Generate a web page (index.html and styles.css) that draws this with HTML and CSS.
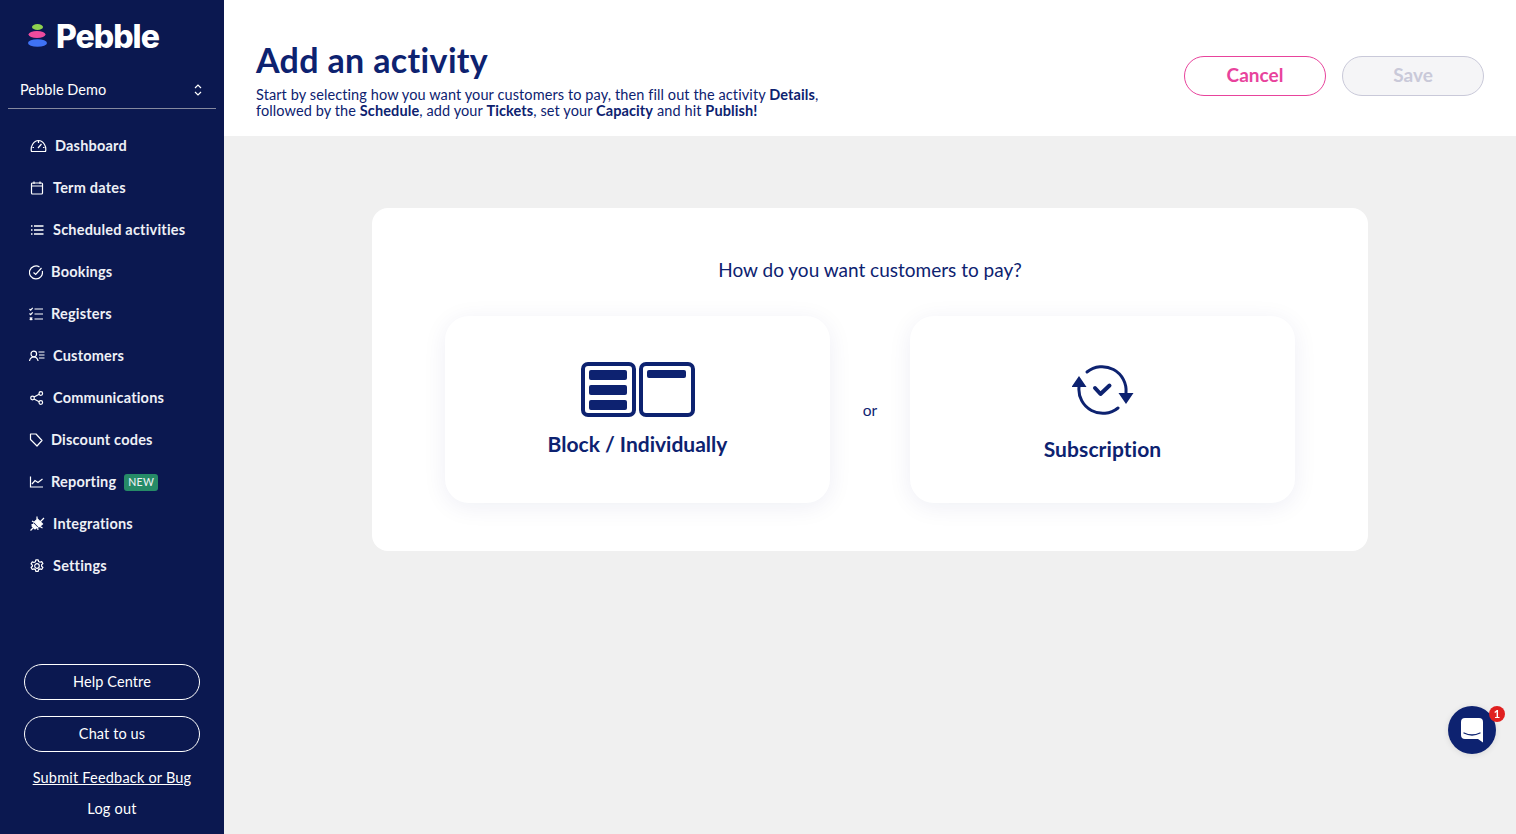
FILE: index.html
```html
<!DOCTYPE html>
<html lang="en">
<head>
    <meta charset="UTF-8">
    <meta name="viewport" content="width=device-width, initial-scale=1.0">
    <title>Add an activity</title>
    <link rel="stylesheet" href="styles.css">
</head>
<body>
    <aside class="sidebar">
        <div class="logo">
            <svg class="logo-mark" width="20" height="26" viewBox="0 0 20 26">
                <ellipse cx="9.500" cy="4" rx="5.500" ry="3" fill="#8fd14f"/>
                <ellipse cx="9" cy="11.500" rx="8.500" ry="3.500" fill="#ee4b9d"/>
                <ellipse cx="9.500" cy="20" rx="9.500" ry="3.800" fill="#3f72f5"/>
            </svg>
            <span class="logo-text">Pebble</span>
        </div>
        <div class="account">
            <span>Pebble Demo</span>
            <svg width="8" height="12" viewBox="0 0 8 12" fill="none" stroke="#fff" stroke-width="1.200"><path d="M1 4l3-3 3 3M1 8l3 3 3-3"/></svg>
        </div>
        <nav class="nav">
            <a class="nav-item">
                <svg class="icon" width="18" height="14" viewBox="-1 0 18 14"><path d="M1.500 12.500C.2 8 3.500 1.500 8.500 1.500S16.800 8 15.500 12.500zM8 9l3.500-4M4 8.500H2.500M8.500 1.500V4M14.500 8.500H13"/></svg>
                <span>Dashboard</span>
            </a>
            <a class="nav-item">
                <svg class="icon" width="16" height="14" viewBox="-1 0 16 14"><rect x="1.500" y="2" width="11" height="11" rx="1"/><path d="M1.500 5h11M4 .5v2.500M10 .5v2.500"/></svg>
                <span>Term dates</span>
            </a>
            <a class="nav-item">
                <svg class="icon icon-list" width="16" height="12" viewBox="-2 0 16 12"><path d="M3 2h9.500M3 6h9.500M3 10h9.500M0 2h1.500M0 6h1.500M0 10h1.500"/></svg>
                <span>Scheduled activities</span>
            </a>
            <a class="nav-item">
                <svg class="icon" width="14" height="15" viewBox="0 0 14 15"><path d="M13.300 6A6.500 6.500 0 1 1 10.500 2M4.500 7.500l2.200 2L12.500 3"/></svg>
                <span>Bookings</span>
            </a>
            <a class="nav-item">
                <svg class="icon" width="14" height="14" viewBox="0 0 14 14"><path d="M5.500 2H14M5.500 7H14M5.500 12H14M.5 2l1.200 1.200L3.700 .8M.5 6.500l1.200 1.200 2-2.400M.8 10.500L3.300 13M3.300 10.500L.8 13"/></svg>
                <span>Registers</span>
            </a>
            <a class="nav-item">
                <svg class="icon" width="16" height="12" viewBox="0 0 16 12"><circle cx="4.800" cy="4" r="2.800"/><path d="M.5 11c.5-2.500 2.300-4 4.300-4s3.800 1.500 4.300 4M9.500 2H15.500M10 5h5.500M10 8h5.500"/></svg>
                <span>Customers</span>
            </a>
            <a class="nav-item">
                <svg class="icon" width="16" height="14" viewBox="-1 0 16 14"><circle cx="2.500" cy="7" r="1.800"/><circle cx="10.800" cy="2.500" r="1.800"/><circle cx="10.800" cy="11.500" r="1.800"/><path d="M4 6l5.200-2.800M4 8l5.200 2.800"/></svg>
                <span>Communications</span>
            </a>
            <a class="nav-item">
                <svg class="icon" width="14" height="14" viewBox="-1 0 14 14"><path d="M.5 1h5.500l6 6.500-5 5.500L.5 6.500z" stroke-linejoin="round"/></svg>
                <span>Discount codes</span>
            </a>
            <a class="nav-item">
                <svg class="icon" width="14" height="12" viewBox="-1 0 14 12"><path d="M.5 .5V11h12.500M2 8l3-3.500 3 2 4.500-3.500"/></svg>
                <span>Reporting</span>
                <span class="badge-new">NEW</span>
            </a>
            <a class="nav-item">
                <svg class="icon" width="16" height="16" viewBox="-1 0 16 16"><path class="solid" d="M4.500 6L7.500 3l5 5-3.500 3z"/><path d="M.5 14.500l4-4M10 6l4-4M2 5l2.500 1.500M1.500 8.500h2.500M7 .5v2.500M8 14l-.5-3M12.500 12L10 10.500"/><path class="solid" d="M3.500 8l3.500 3.500-2 1.500-3-3z"/></svg>
                <span>Integrations</span>
            </a>
            <a class="nav-item">
                <svg class="icon" width="16" height="14" viewBox="-1 0 16 14"><circle cx="7" cy="7" r="2.300"/><path d="M5.800 .8h2.400l.4 1.700 1.400.7 1.700-.6 1.200 2-1.300 1.200v1.500l1.300 1.200-1.200 2-1.700-.6-1.400.7-.4 1.700H5.800l-.4-1.700-1.400-.7-1.700.6-1.200-2 1.300-1.200V6.100L1.100 4.900l1.200-2 1.700.6 1.400-.7z" stroke-linejoin="round"/></svg>
                <span>Settings</span>
            </a>
        </nav>
        <div class="sidebar-bottom">
            <a class="side-btn">Help Centre</a>
            <a class="side-btn">Chat to us</a>
            <a class="side-link underline">Submit Feedback or Bug</a>
            <a class="side-link">Log out</a>
        </div>
    </aside>
    <div class="page">
        <header class="page-header">
            <div class="page-title">
                <h1>Add an activity</h1>
                <p>Start by selecting how you want your customers to pay, then fill out the activity <b>Details</b>,<br>followed by the <b>Schedule</b>, add your <b>Tickets</b>, set your <b>Capacity</b> and hit <b>Publish!</b></p>
            </div>
            <div class="header-actions">
                <button class="btn btn-cancel">Cancel</button>
                <button class="btn btn-save" disabled>Save</button>
            </div>
        </header>
        <main class="content">
            <section class="card">
                <h2>How do you want customers to pay?</h2>
                <div class="options">
                    <div class="option">
                        <svg width="116" height="57" viewBox="0 0 116 57">
                            <rect x="3" y="3" width="51" height="51" rx="5" class="frame"/>
                            <rect x="9" y="9" width="38" height="10" rx="2" class="bar"/>
                            <rect x="9" y="24" width="38" height="10" rx="2" class="bar"/>
                            <rect x="9" y="39" width="38" height="10" rx="2" class="bar"/>
                            <rect x="61" y="3" width="52" height="51" rx="5" class="frame"/>
                            <rect x="67" y="9" width="39" height="8" rx="2" class="bar"/>
                        </svg>
                        <h3>Block / Individually</h3>
                    </div>
                    <span class="or">or</span>
                    <div class="option option-sub">
                        <svg width="62" height="52" viewBox="1071 363 62 52">
                            <path class="arc" d="M1086 372A24 24 0 0 1 1125 393"/>
                            <path class="arc" d="M1078 387A24 24 0 0 0 1117 408"/>
                            <path class="bar" d="M1078 376l7.500 11h-15zM1125 404l-7.500-11h15z"/>
                            <path class="check" d="M1094 388l5.500 6 9-8.500"/>
                        </svg>
                        <h3>Subscription</h3>
                    </div>
                </div>
            </section>
        </main>
    </div>
    <div class="chat-launcher">
        <svg width="22" height="25" viewBox="0 0 22 25">
            <path d="M4 0h14a4 4 0 0 1 4 4v20.500L17 21H4a4 4 0 0 1-4-4V4a4 4 0 0 1 4-4z" fill="#fff"/>
            <path d="M3 15c5 2.500 11 2.500 16 0" fill="none" stroke="#0d2270" stroke-width="1.300" stroke-linecap="round"/>
        </svg>
        <span class="chat-count">1</span>
    </div>
</body>
</html>
```

FILE: styles.css
```css
* {
    box-sizing: border-box;
}

html, body {
    height: 100%;
}

body {
    display: flex;
    margin: 0;
    height: 834px;
    overflow: hidden;
    font-family: 'Lato', sans-serif;
    color: #0d2270;
    background-color: #f0f0f0;
}

.sidebar {
    display: flex;
    flex-direction: column;
    flex: none;
    width: 224px;
    padding: 0 8px;
    background-color: #0b1850;
    color: #fff;
}

.logo {
    display: flex;
    align-items: center;
    gap: 8px;
    height: 72px;
    padding-left: 20px;
}

.logo-text {
    font-family: 'Inter', sans-serif;
    font-size: 32px;
    font-weight: 800;
    letter-spacing: -1px;
}

.account {
    display: flex;
    justify-content: space-between;
    align-items: center;
    height: 37px;
    padding: 0 14px 1px 12px;
    font-size: 14.500px;
    letter-spacing: .05px;
    border-bottom: 1px solid #85899f;
}

.nav {
    display: flex;
    flex-direction: column;
    padding-top: 16px;
}

.nav-item {
    display: flex;
    align-items: center;
    gap: 8px;
    height: 42px;
    padding-left: 21px;
    font-size: 14.500px;
    font-weight: 700;
    letter-spacing: .2px;
    color: #eef0f6;
}

.nav-item span {
    margin-bottom: 2px;
}

.icon {
    flex: none;
    fill: none;
    stroke: #fff;
    stroke-width: 1.200;
}

.icon .solid {
    fill: #fff;
}

.icon-list {
    stroke-width: 1.500;
}

.nav-item .badge-new {
    margin-bottom: 0;
    padding: 2px 4px;
    font-size: 10.500px;
    font-weight: 500;
    line-height: 13px;
    letter-spacing: .3px;
    border-radius: 3px;
    background-color: #268b67;
}

.sidebar-bottom {
    display: flex;
    flex-direction: column;
    align-items: center;
    margin-top: auto;
    padding: 0 16px 15px;
}

.side-btn {
    width: 100%;
    height: 36px;
    margin-bottom: 16px;
    font-size: 14.500px;
    line-height: 34px;
    letter-spacing: .1px;
    text-align: center;
    border: 1px solid #fff;
    border-radius: 18px;
}

.side-link {
    height: 20px;
    margin-top: 5px;
    font-size: 14.500px;
    line-height: 20px;
    letter-spacing: .2px;
}

.side-link.underline {
    margin-top: 0;
    margin-bottom: 6px;
    text-decoration: underline;
}

.page {
    display: flex;
    flex-direction: column;
    flex: 1;
    min-width: 0;
}

.page-header {
    display: flex;
    justify-content: space-between;
    align-items: flex-start;
    height: 136px;
    padding: 39px 32px 0;
    background-color: #fff;
}

h1 {
    margin: 0 0 6px;
    font-size: 34px;
    font-weight: 700;
    line-height: 42px;
    letter-spacing: .35px;
}

.page-title p {
    margin: 0;
    font-size: 14.500px;
    line-height: 16px;
    letter-spacing: .1px;
}

.header-actions {
    display: flex;
    gap: 16px;
    padding-top: 17px;
}

.btn {
    width: 142px;
    height: 40px;
    padding: 0 0 3px;
    font-family: inherit;
    font-size: 19px;
    font-weight: 700;
    border-radius: 20px;
    background-color: #fff;
}

.btn-cancel {
    color: #e8439c;
    border: 1px solid #e8439c;
}

.btn-save {
    color: #c9c9d9;
    border: 1px solid #c9c9d9;
    background-color: #f5f5f7;
}

.content {
    flex: 1;
    padding: 72px 148px 0;
}

.card {
    display: flex;
    flex-direction: column;
    align-items: center;
    height: 343px;
    padding-top: 50px;
    border-radius: 16px;
    background-color: #fff;
}

h2 {
    margin: 0 0 34px;
    font-size: 19px;
    font-weight: 400;
    line-height: 24px;
}

.options {
    display: flex;
    align-items: center;
}

.or {
    width: 80px;
    font-size: 15.500px;
    text-align: center;
}

.option {
    display: flex;
    flex-direction: column;
    align-items: center;
    width: 385px;
    height: 187px;
    padding-top: 45px;
    border-radius: 24px;
    background-color: #fff;
    box-shadow: 0 4px 24px rgba(13, 34, 112, 0.07);
}

.option-sub {
    padding-top: 47px;
}

.option-sub h3 {
    margin-top: 20px;
    letter-spacing: .1px;
}

h3 {
    margin: 12px 0 0;
    font-size: 21px;
    font-weight: 700;
    line-height: 28px;
}

.frame {
    fill: #fff;
    stroke: #0d2270;
    stroke-width: 4;
}

.bar {
    fill: #0d2270;
}

.arc {
    fill: none;
    stroke: #0d2270;
    stroke-width: 3;
    stroke-linecap: round;
}

.check {
    fill: none;
    stroke: #0d2270;
    stroke-width: 4;
    stroke-linecap: round;
    stroke-linejoin: round;
}

.chat-launcher {
    position: fixed;
    top: 706px;
    left: 1448px;
    display: flex;
    justify-content: center;
    align-items: center;
    width: 48px;
    height: 48px;
    border-radius: 50%;
    background-color: #0d2270;
    box-shadow: 0 1px 6px rgba(0, 0, 0, 0.1);
}

.chat-count {
    position: absolute;
    top: 0;
    right: -9px;
    width: 16px;
    height: 16px;
    font-size: 11px;
    font-weight: 700;
    line-height: 16px;
    text-align: center;
    color: #fff;
    border-radius: 50%;
    background-color: #e02020;
}
```
